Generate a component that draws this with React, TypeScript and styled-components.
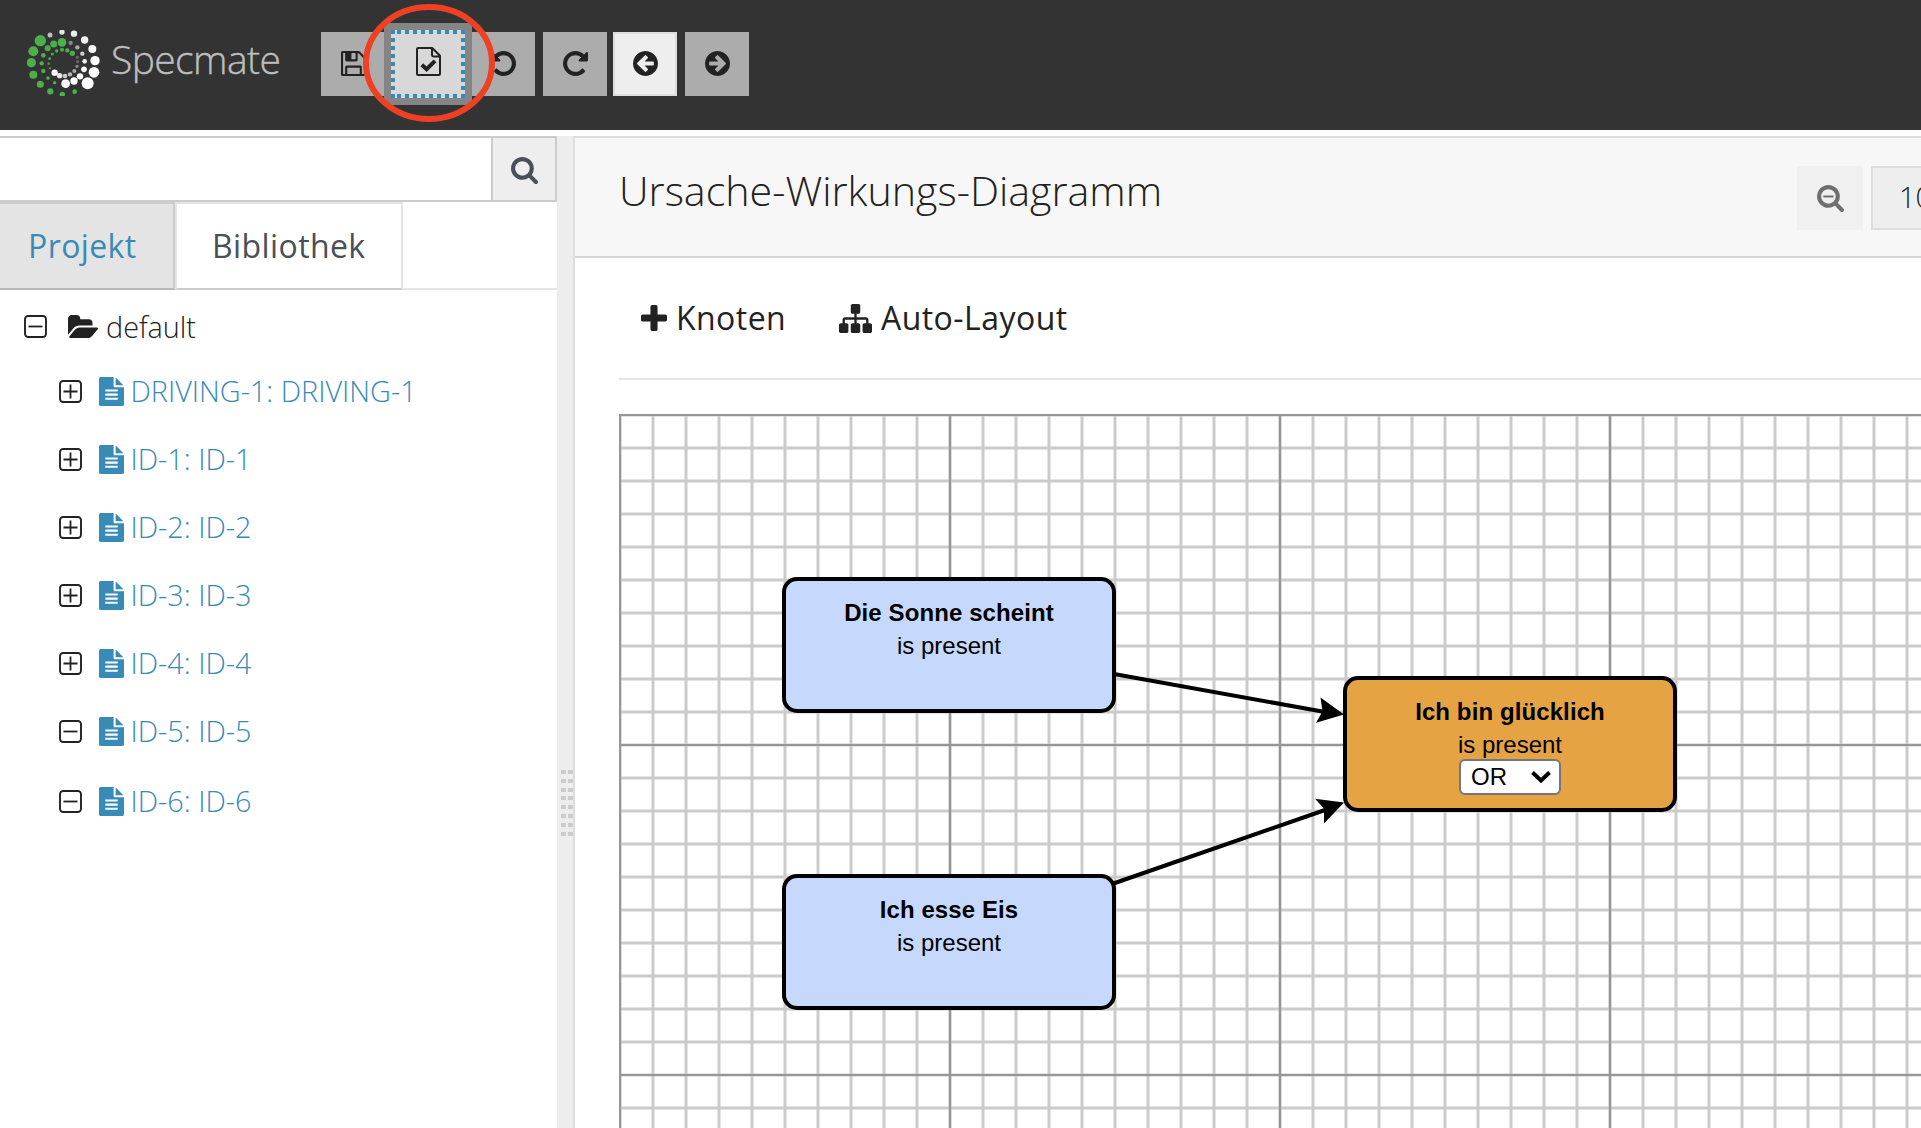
import React from 'react';
import styled, { createGlobalStyle } from 'styled-components';

const GlobalStyle = createGlobalStyle`
  *, *::before, *::after { box-sizing: border-box; }
  html, body { margin: 0; padding: 0; overflow: hidden; }
  body { background: #fff; color: #222; font-family: 'Open Sans', 'Noto Sans', sans-serif; }
  button { font: inherit; color: inherit; padding: 0; margin: 0; border-radius: 0; }
`;

/* ---------- icons ---------- */

const paths = {
  save: 'M512 1536h768v-384h-768v384zm896 0h128v-896q0-14-10-38.5t-20-34.5l-281-281q-10-10-34-20t-39-10v416q0 40-28 68t-68 28h-576q-40 0-68-28t-28-68v-416h-128v1280h128v-416q0-40 28-68t68-28h832q40 0 68 28t28 68v416zm-384-928v-320q0-13-9.5-22.5t-22.5-9.5h-192q-13 0-22.5 9.5t-9.5 22.5v320q0 13 9.5 22.5t22.5 9.5h192q13 0 22.5-9.5t9.5-22.5zm640 32v928q0 40-28 68t-68 28h-1344q-40 0-68-28t-28-68v-1344q0-40 28-68t68-28h928q40 0 88 20t76 48l280 280q28 28 48 76t20 88z',
  repeat: 'M1664 256v448q0 26-19 45t-45 19h-448q-42 0-59-40-17-39 14-69l138-138q-148-137-349-137-104 0-198.5 40.5t-163.5 109.5-109.5 163.5-40.5 198.5 40.5 198.5 109.5 163.5 163.5 109.5 198.5 40.5q119 0 225-52t179-147q7-10 23-12 15 0 25 9l137 138q9 8 9.5 20.5t-7.5 22.5q-109 132-264 204.5t-327 72.5q-156 0-298-61t-245-164-164-245-61-298 61-298 164-245 245-164 298-61q147 0 284.5 55.5t244.5 156.5l130-129q29-31 70-14 39 17 39 59z',
  arrow: 'M1408 960v-128q0-26-19-45t-45-19h-502l189-189q19-19 19-45t-19-45l-91-91q-18-18-45-18t-45 18l-362 362-91 91q-18 18-18 45t18 45l91 91 362 362q18 18 45 18t45-18l91-91q18-18 18-45t-18-45l-189-189h502q26 0 45-19t19-45zm256-64q0 209-103 385.5t-279.5 279.5-385.5 103-385.5-103-279.5-279.5-103-385.5 103-385.5 279.5-279.5 385.5-103 385.5 103 279.5 279.5 103 385.5z',
  search: 'M1216 832q0-185-131.5-316.5t-316.5-131.5-316.5 131.5-131.5 316.5 131.5 316.5 316.5 131.5 316.5-131.5 131.5-316.5zm512 832q0 52-38 90t-90 38q-54 0-90-38l-343-342q-179 124-399 124-143 0-273.5-55.5t-225-150-150-225-55.5-273.5 55.5-273.5 150-225 225-150 273.5-55.5 273.5 55.5 225 150 150 225 55.5 273.5q0 220-124 399l343 343q37 37 37 90z',
  minus: 'M1088 800v64q0 13-9.5 22.5t-22.5 9.5h-576q-13 0-22.5-9.5t-9.5-22.5v-64q0-13 9.5-22.5t22.5-9.5h576q13 0 22.5 9.5t9.5 22.5z',
  plus: 'M1600 736v192q0 40-28 68t-68 28h-416v416q0 40-28 68t-68 28h-192q-40 0-68-28t-28-68v-416h-416q-40 0-68-28t-28-68v-192q0-40 28-68t68-28h416v-416q0-40 28-68t68-28h192q40 0 68 28t28 68v416h416q40 0 68 28t28 68z',
  sitemap: 'M1792 1248v320q0 40-28 68t-68 28h-320q-40 0-68-28t-28-68v-320q0-40 28-68t68-28h96v-192h-512v192h96q40 0 68 28t28 68v320q0 40-28 68t-68 28h-320q-40 0-68-28t-28-68v-320q0-40 28-68t68-28h96v-192h-512v192h96q40 0 68 28t28 68v320q0 40-28 68t-68 28h-320q-40 0-68-28t-28-68v-320q0-40 28-68t68-28h96v-192q0-52 38-90t90-38h512v-192h-96q-40 0-68-28t-28-68v-320q0-40 28-68t68-28h320q40 0 68 28t28 68v320q0 40-28 68t-68 28h-96v192h512q52 0 90 38t38 90v192h96q40 0 68 28t28 68z',
  folder: 'M1943 952q0 31-31 66l-336 396q-43 51-120.5 86.5t-143.5 35.5h-1088q-34 0-60.5-13t-26.5-43q0-31 31-66l336-396q43-51 120.5-86.5t143.5-35.5h1088q34 0 60.5 13t26.5 43zm-343-344v160h-832q-94 0-197 47.5t-164 119.5l-337 396-5 6q0-4-.5-12.5t-.5-12.5v-960q0-92 66-158t158-66h320q92 0 158 66t66 158v32h544q92 0 158 66t66 158z',
  file: 'M1596 476q14 14 28 36h-472v-472q22 14 36 28zm-476 164h544v1056q0 40-28 68t-68 28h-1344q-40 0-68-28t-28-68v-1600q0-40 28-68t68-28h800v544q0 40 28 68t68 28zm160 736v-64q0-14-9-23t-23-9h-704q-14 0-23 9t-9 23v64q0 14 9 23t23 9h704q14 0 23-9t9-23zm0-256v-64q0-14-9-23t-23-9h-704q-14 0-23 9t-9 23v64q0 14 9 23t23 9h704q14 0 23-9t9-23zm0-256v-64q0-14-9-23t-23-9h-704q-14 0-23 9t-9 23v64q0 14 9 23t23 9h704q14 0 23-9t9-23z',
};

const Svg = styled.svg<{ $flip?: boolean }>`
  display: block;
  flex: none;
  fill: currentColor;
  transform: ${(p) => (p.$flip ? 'scaleX(-1)' : 'none')};
`;

type GlyphProps = { d: string; box: string; w: number; h: number; flip?: boolean };
const Glyph = ({ d, box, w, h, flip }: GlyphProps) => (
  <Svg viewBox={box} width={w} height={h} $flip={flip} preserveAspectRatio="none">
    <path d={d} />
  </Svg>
);

const ROUND = '128 128 1536 1536';

const ValidateIcon = () => (
  <Svg viewBox="0 0 25 29" width={25} height={29}>
    <path
      d="M1 2.2Q1 1 2.2 1H16.2L24 8.8V26.8Q24 28 22.8 28H2.2Q1 28 1 26.8ZM16 1.4V8Q16 9.4 17.4 9.4H23.6"
      fill="none"
      stroke="currentColor"
      strokeWidth="2"
      strokeLinejoin="round"
    />
    <path d="M5.800 17.800L10.600 22.200L19 13.800" fill="none" stroke="currentColor" strokeWidth="4" />
  </Svg>
);

const Expander = ({ open }: { open?: boolean }) => (
  <Svg viewBox="0 0 23 23" width={23} height={23}>
    <rect x="1" y="1" width="21" height="21" rx="3.2" fill="none" stroke="currentColor" strokeWidth="1.9" />
    <path d={open ? 'M4.5 11.5H18.5' : 'M4.5 11.5H18.5M11.5 4.5V18.5'} stroke="currentColor" strokeWidth="1.8" />
  </Svg>
);

/* ---------- header ---------- */

const Header = styled.header`
  height: 130px;
  background: #333;
  display: flex;
  align-items: flex-start;
  position: relative;
`;

const Brand = styled.div`
  display: flex;
  flex: none;
  width: 321px;
  padding: 30px 0 0 27px;
`;

const BrandName = styled.span`
  margin-left: 11px;
  font: 300 39px/58px 'Open Sans', sans-serif;
  letter-spacing: -0.6px;
  color: #bdbdbd;
  -webkit-text-stroke: 0.4px #bdbdbd;
  white-space: nowrap;
`;

const green = '#4caf4a';
const dots: [number, number, number, string][] = [
  [121, 122, 17, green], [100, 154, 15, green], [94, 188, 14, green], [100, 224, 12, green], [121, 253, 10.5, green],
  [151, 274, 9.5, green], [187, 283, 8, green], [224, 275, 7, green],
  [186, 127, 13, green], [161, 132, 10.5, green], [143, 145, 9, green], [130, 166, 7, green], [125, 190, 6.5, green],
  [130, 213, 6.5, green], [144, 234, 5.5, green], [164, 248, 5, green],
  [217, 160, 8, green], [202, 151, 6.5, green], [186, 149, 6, green], [170, 153, 5, green], [157, 162, 4.5, green],
  [149, 176, 4, green], [146, 191, 3.5, green], [150, 205, 3, green],
  [150, 105, 7.5, '#bbb'], [186, 96, 8, '#e4e4e4'], [222, 101, 9.5, '#eee'], [254, 120, 11, '#f3f3f3'], [277, 147, 12, '#f8f8f8'],
  [285, 182, 14, '#fff'], [282, 217, 16, '#fff'], [263, 250, 18, '#fff'],
  [212, 129, 6.5, '#888'], [232, 142, 6.5, '#aaa'], [247, 161, 6.5, '#ccc'], [254, 184, 7, '#eee'], [252, 208, 8.5, '#fff'],
  [240, 229, 9.5, '#fff'], [222, 243, 11, '#fff'], [197, 251, 13, '#fff'],
  [232, 172, 5, '#666'], [233, 185, 5, '#666'], [231, 199, 5, '#888'], [223, 213, 6, '#aaa'], [210, 223, 6.5, '#bbb'],
  [195, 228, 7, '#ccc'], [179, 227, 8, '#eee'], [164, 218, 9.5, '#fff'],
];

const BrandMark = () => (
  <Svg viewBox="81 90 219 198" width={73} height={66}>
    {dots.map(([cx, cy, r, c], i) => (
      <circle key={i} cx={cx} cy={cy} r={r} fill={c} />
    ))}
  </Svg>
);

const Tools = styled.nav`
  display: flex;
  padding-top: 32px;
`;

const Tool = styled.button<{ $lit?: boolean; $gap?: number }>`
  width: 64px;
  height: 64px;
  margin-right: ${(p) => p.$gap ?? 0}px;
  padding-bottom: 1px;
  display: flex;
  align-items: center;
  justify-content: center;
  border: 2px solid ${(p) => (p.$lit ? '#ddd' : '#acacac')};
  background: ${(p) => (p.$lit ? '#eee' : '#acacac')};
`;

const FocusedTool = styled.button`
  position: relative;
  width: 88px;
  height: 82px;
  margin: -9px -1px 0 -1px;
  border: 0;
  background: #848484;
  display: flex;
  align-items: center;
  justify-content: center;
`;

const FocusFrame = styled.span`
  position: relative;
  width: 74px;
  height: 68px;
  background: #d8d8d8;
  display: flex;
  align-items: center;
  justify-content: center;
  padding-bottom: 5px;
`;

const FocusDots = styled.svg`
  position: absolute;
  inset: 0;
`;

const Marker = styled.svg`
  position: absolute;
  left: 360px;
  top: 0;
  z-index: 3;
`;

/* ---------- body ---------- */

const Body = styled.div`
  display: flex;
  height: 998px;
  padding-top: 6px;
`;

const Sidebar = styled.aside`
  width: 557px;
  flex: none;
  display: flex;
  flex-direction: column;
`;

const SearchBar = styled.div`
  display: flex;
  height: 66px;
  border: 2px solid #ccc;
  border-left: 0;
`;

const SearchField = styled.input`
  flex: 1;
  min-width: 0;
  border: 0;
  padding: 0 16px;
  background: #fff;
`;

const SearchButton = styled.button`
  width: 64px;
  border: 0;
  border-left: 2px solid #ccc;
  background: #eee;
  color: #495057;
  display: flex;
  align-items: center;
  justify-content: center;
  padding-top: 2px;
`;

const Tabs = styled.div`
  display: flex;
  height: 88px;
  border-bottom: 2px solid #e6e6e6;
`;

const Tab = styled.div<{ $active?: boolean }>`
  width: ${(p) => (p.$active ? 175 : 228)}px;
  height: 88px;
  padding-left: ${(p) => (p.$active ? 28 : 35)}px;
  border: 2px solid ${(p) => (p.$active ? '#ccc' : '#e4e4e4')};
  border-left-width: ${(p) => (p.$active ? 0 : 2)}px;
  border-bottom-color: ${(p) => (p.$active ? '#b8b8b8' : '#ccc')};
  background: ${(p) => (p.$active ? '#e4e4e4' : '#fff')};
  color: ${(p) => (p.$active ? '#398bb7' : '#495057')};
  font-size: 32px;
  letter-spacing: 0.4px;
  line-height: 83px;
  white-space: nowrap;
`;

const Tree = styled.ul`
  list-style: none;
  margin: 0;
  padding: 16px 0 0;
  display: flex;
  flex-direction: column;
  font-weight: 300;
  font-size: 28.8px;
`;

const TreeRoot = styled.li`
  display: flex;
  align-items: center;
  height: 41px;
  padding-left: 23.5px;
  margin-bottom: 10px;
`;

const TreeItem = styled.li<{ $last?: boolean }>`
  display: flex;
  align-items: center;
  height: 68px;
  margin-top: ${(p) => (p.$last ? 2 : 0)}px;
  padding-left: 58.5px;
`;

const IconSlot = styled.span<{ $left: number; $right: number; $color?: string }>`
  margin: 0 ${(p) => p.$right}px 0 ${(p) => p.$left}px;
  color: ${(p) => p.$color ?? 'inherit'};
`;

const TreeLabel = styled.span<{ $link?: boolean }>`
  line-height: 40px;
  white-space: nowrap;
  color: ${(p) => (p.$link ? '#398bb7' : '#222')};
`;

const Splitter = styled.div`
  width: 16px;
  flex: none;
  background: #ededed;
  padding: 634px 0 0 4px;
`;

const Grip = styled.div`
  display: grid;
  grid-template-columns: 5px 5px;
  grid-auto-rows: 4px;
  gap: 4.8px 2px;
`;

const GripDot = styled.i`
  background: #ccc;
`;

const Main = styled.main`
  flex: 1;
  min-width: 0;
  border-left: 2px solid #ddd;
  border-top: 2px solid #ddd;
  overflow: hidden;
  display: flex;
  flex-direction: column;
`;

const TitleBar = styled.div`
  height: 120px;
  flex: none;
  display: flex;
  align-items: flex-start;
  background: #f7f7f7;
  border-bottom: 2px solid #d6d6d6;
  padding-left: 44px;
`;

const Title = styled.h1`
  margin: 19px 0 0;
  width: 1178px;
  flex: none;
  font-weight: 300;
  font-size: 41.2px;
  line-height: 66px;
  white-space: nowrap;
`;

const ZoomButton = styled.button`
  width: 66px;
  height: 64px;
  margin: 28px 8px 0 0;
  flex: none;
  border: 0;
  background: #f0f0f0;
  color: #6f6f6f;
  display: flex;
  align-items: center;
  justify-content: center;
`;

const ZoomLevel = styled.div`
  width: 120px;
  flex: none;
  height: 64px;
  margin-top: 28px;
  padding-left: 26px;
  border: 2px solid #ddd;
  background: #eee;
  font-weight: 300;
  font-size: 29px;
  line-height: 58px;
`;

const Editor = styled.section`
  padding-left: 44px;
  display: flex;
  flex-direction: column;
`;

const Actions = styled.div`
  height: 122px;
  display: flex;
  align-items: center;
  padding-left: 22px;
  border-bottom: 2px solid #e4e4e4;
`;

const Action = styled.button<{ $gap: number; $width: number }>`
  border: 0;
  background: none;
  display: flex;
  align-items: center;
  gap: ${(p) => p.$gap}px;
  width: ${(p) => p.$width}px;
  font-size: 32px;
  letter-spacing: 0.45px;
  line-height: 44px;
  white-space: nowrap;
`;

const Canvas = styled.div`
  position: relative;
  height: 714px;
  margin-top: 34px;
`;

const Drawing = styled.svg`
  display: block;
`;

const Node = styled.div<{ $x: number; $y: number; $effect?: boolean }>`
  position: absolute;
  left: ${(p) => p.$x}px;
  top: ${(p) => p.$y}px;
  width: 334px;
  height: 136px;
  border: 4px solid #000;
  border-radius: 15px;
  background: ${(p) => (p.$effect ? '#e5a344' : '#c6d8fc')};
  color: #000;
  display: flex;
  flex-direction: column;
  align-items: center;
  padding-top: 15px;
  font: 24px/33px 'Liberation Sans', Arial, sans-serif;
`;

const NodeName = styled.strong`
  font-weight: 700;
  letter-spacing: 0.1px;
`;

const Gate = styled.div`
  width: 102px;
  height: 36px;
  margin-top: -2px;
  border: 2.5px solid #767676;
  border-radius: 6px;
  background: #fff;
  display: flex;
  align-items: center;
  justify-content: space-between;
  padding: 0 8px 0 10px;
  line-height: 32px;
`;

const items: { label: string; open?: boolean }[] = [
  { label: 'DRIVING-1: DRIVING-1' },
  { label: 'ID-1: ID-1' },
  { label: 'ID-2: ID-2' },
  { label: 'ID-3: ID-3' },
  { label: 'ID-4: ID-4' },
  { label: 'ID-5: ID-5', open: true },
  { label: 'ID-6: ID-6', open: true },
];

const gridLines = (count: number, toPath: (p: number) => string, major: boolean) =>
  Array.from({ length: count }, (_, i) => i)
    .filter((i) => !major || i % 10 === 0)
    .map((i) => toPath(i * 33 + 1))
    .join('');

const vertical = (p: number) => `M${p} 0V714`;
const horizontal = (p: number) => `M0 ${p}H1302`;

const Grid = () => (
  <Drawing width={1302} height={714}>
    <path d={gridLines(40, vertical, false) + gridLines(22, horizontal, false)} stroke="#cbcbcb" strokeWidth="3" fill="none" />
    <path d={gridLines(40, vertical, true) + gridLines(22, horizontal, true)} stroke="#969696" strokeWidth="2.2" fill="none" />
    <g stroke="#000" strokeWidth="4">
      <path d="M495 260L706 298" />
      <path d="M493 470L706 396" />
    </g>
    <path d="M725 300.500L697 308.700L703.500 297.500L701.500 283.500Z" />
    <path d="M725 388.500L696 384.700L705 394.500L705 409.500Z" />
  </Drawing>
);

export default function App() {
  return (
    <>
      <GlobalStyle />
      <Header>
        <Brand>
          <BrandMark />
          <BrandName>Specmate</BrandName>
        </Brand>
        <Tools>
          <Tool><Glyph d={paths.save} box={ROUND} w={25} h={25} /></Tool>
          <FocusedTool>
            <FocusFrame>
              <FocusDots width="74" height="68">
                <path d="M0 2H74M0 66H74" stroke="#398bb7" strokeWidth="4" strokeDasharray="4 4" strokeDashoffset="2" />
                <path d="M2 0V68M72 0V68" stroke="#398bb7" strokeWidth="4" strokeDasharray="4 4" />
              </FocusDots>
              <ValidateIcon />
            </FocusFrame>
          </FocusedTool>
          <Tool $gap={8}><Glyph d={paths.repeat} box={ROUND} w={25} h={25} flip /></Tool>
          <Tool $gap={6}><Glyph d={paths.repeat} box={ROUND} w={25} h={25} /></Tool>
          <Tool $lit $gap={8}><Glyph d={paths.arrow} box={ROUND} w={25} h={25} /></Tool>
          <Tool><Glyph d={paths.arrow} box={ROUND} w={25} h={25} flip /></Tool>
        </Tools>
        <Marker width="140" height="128">
          <ellipse cx="69" cy="63" rx="63" ry="56" fill="none" stroke="#ee4123" strokeWidth="6" />
        </Marker>
      </Header>
      <Body>
        <Sidebar>
          <SearchBar>
            <SearchField />
            <SearchButton><Glyph d={paths.search} box="64 128 1664 1664" w={27} h={27} /></SearchButton>
          </SearchBar>
          <Tabs>
            <Tab $active>Projekt</Tab>
            <Tab>Bibliothek</Tab>
          </Tabs>
          <Tree>
            <TreeRoot>
              <Expander open />
              <IconSlot $left={20.5} $right={8}><Glyph d={paths.folder} box="0 128 1943 1408" w={31} h={23} /></IconSlot>
              <TreeLabel>default</TreeLabel>
            </TreeRoot>
            {items.map((it, i) => (
              <TreeItem key={it.label} $last={i === items.length - 1}>
                <Expander open={it.open} />
                <IconSlot $left={17} $right={7} $color="#398bb7"><Glyph d={paths.file} box="128 0 1536 1792" w={25} h={29} /></IconSlot>
                <TreeLabel $link>{it.label}</TreeLabel>
              </TreeItem>
            ))}
          </Tree>
        </Sidebar>
        <Splitter>
          <Grip>{Array.from({ length: 16 }, (_, i) => <GripDot key={i} />)}</Grip>
        </Splitter>
        <Main>
          <TitleBar>
            <Title>Ursache-Wirkungs-Diagramm</Title>
            <ZoomButton><Glyph d={paths.search + paths.minus} box="64 128 1664 1664" w={27} h={27} /></ZoomButton>
            <ZoomLevel>100%</ZoomLevel>
          </TitleBar>
          <Editor>
            <Actions>
              <Action $gap={9} $width={198}><Glyph d={paths.plus} box="192 128 1408 1408" w={26} h={26} />Knoten</Action>
              <Action $gap={9} $width={240}><Glyph d={paths.sitemap} box="0 128 1792 1536" w={33} h={29} />Auto-Layout</Action>
            </Actions>
            <Canvas>
              <Grid />
              <Node $x={163} $y={163}><NodeName>Die Sonne scheint</NodeName><span>is present</span></Node>
              <Node $x={163} $y={460}><NodeName>Ich esse Eis</NodeName><span>is present</span></Node>
              <Node $x={724} $y={262} $effect>
                <NodeName>Ich bin glücklich</NodeName>
                <span>is present</span>
                <Gate>
                  OR
                  <Svg width="20" height="14" viewBox="0 0 20 14">
                    <path d="M1.500 2.500L10 10.500L18.500 2.500" fill="none" stroke="#000" strokeWidth="4" />
                  </Svg>
                </Gate>
              </Node>
            </Canvas>
          </Editor>
        </Main>
      </Body>
    </>
  );
}
